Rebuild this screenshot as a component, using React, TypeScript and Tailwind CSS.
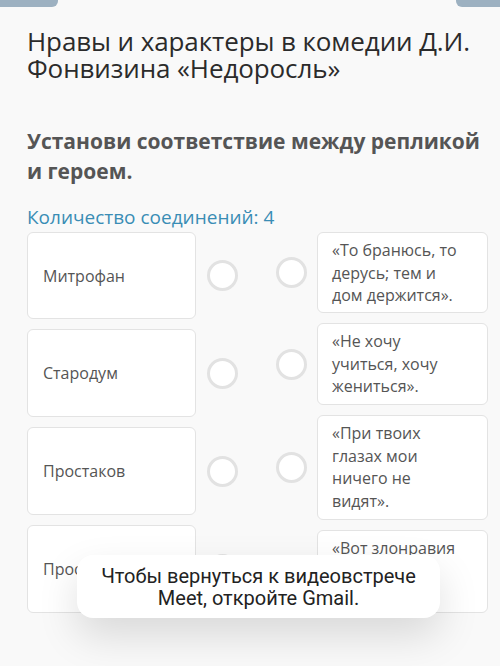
import React from "react";

const font = { fontFamily: '"Open Sans", "Noto Sans", sans-serif' };

const leftItems = [
  { text: "Митрофан", h: "h-[87px]" },
  { text: "Стародум", h: "h-[88px]" },
  { text: "Простаков", h: "h-[88px]" },
  { text: "Простакова", h: "h-[88px]" },
];

const rightItems = [
  { text: "«То бранюсь, то дерусь; тем и дом держится».", h: "h-[81px]" },
  { text: "«Не хочу учиться, хочу жениться».", h: "h-[82px]" },
  { text: "«При твоих глазах мои ничего не видят».", h: "h-[105px]" },
  { text: "«Вот злонравия достойные плоды!»", h: "h-[83px]" },
];

function Circle() {
  return <div className="w-[31px] h-[31px] rounded-full border-[3px] border-[#e2e2e2] bg-white shrink-0" />;
}

export default function App() {
  return (
    <div className="relative w-[500px] h-[666px] overflow-hidden bg-[#f9f9f9]" style={font}>
      <div className="absolute left-0 top-0 w-[58px] h-[7px] bg-[#9db1c1] rounded-br-[6px]" />
      <div className="absolute right-0 top-0 w-[44px] h-[7px] bg-[#9db1c1] rounded-bl-[6px]" />

      <div className="pl-[27px] pr-[20px] pt-[28px]">
        <h1 className="text-[26px] leading-[27px] text-[#2b2b2b] font-normal tracking-[-0.1px]">
          Нравы и характеры в комедии Д.И. Фонвизина «Недоросль»
        </h1>
        <h2 className="mt-[44px] text-[21px] leading-[30px] font-bold text-[#555]">
          Установи соответствие между репликой и героем.
        </h2>
        <div className="mt-[18px] text-[19px] leading-[26px] text-[#3a8db5]">Количество соединений: 4</div>
      </div>

      <div className="flex pl-[27px] mt-[2px]">
        <div className="flex flex-col gap-[10px] w-[211px]">
          {leftItems.map((it) => (
            <div key={it.text} className="flex items-center">
              <div
                className={`w-[171px] ${it.h} bg-white border border-[#e3e3e3] rounded-[6px] flex items-center pl-[15px] text-[16px] text-[#555]`}
              >
                {it.text}
              </div>
              <div className="ml-[11px]">
                <Circle />
              </div>
            </div>
          ))}
        </div>
        <div className="flex flex-col gap-[10px] ml-[38px] w-[212px]">
          {rightItems.map((it) => (
            <div key={it.text} className="flex items-center">
              <Circle />
              <div
                className={`ml-[10px] w-[171px] ${it.h} bg-white border border-[#e3e3e3] rounded-[6px] pl-[14px] pr-[22px] pt-[6px] text-[16px] leading-[22.5px] text-[#555] overflow-hidden`}
              >
                {it.text}
              </div>
            </div>
          ))}
        </div>
      </div>

      <div
        className="absolute left-[77px] top-[555px] w-[363px] h-[63px] bg-white rounded-[16px] shadow-[0_18px_40px_rgba(0,0,0,0.13)] flex flex-col items-center justify-center text-[20px] leading-[22px] text-[#222] text-center"
        style={{ fontFamily: 'Roboto, "Noto Sans", sans-serif' }}
      >
        <div>Чтобы вернуться к видеовстрече</div>
        <div>Meet, откройте Gmail.</div>
      </div>
    </div>
  );
}
